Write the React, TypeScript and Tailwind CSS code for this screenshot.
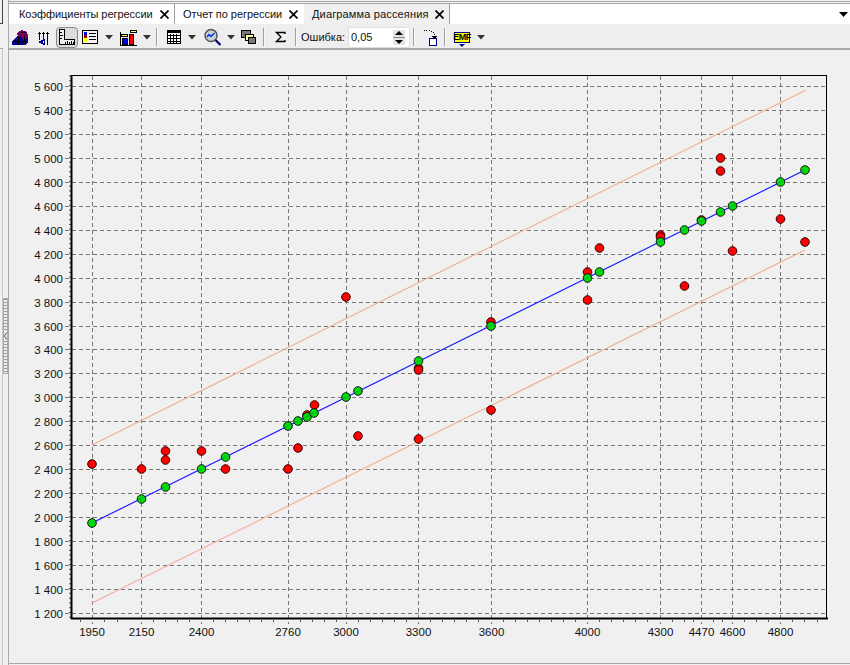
import type { ReactNode } from "react";

const font = "[font-family:'Liberation_Sans',Arial,sans-serif]";
const svgFont = "'Liberation Sans', Arial, sans-serif";

const yTicks = [5600, 5400, 5200, 5000, 4800, 4600, 4400, 4200, 4000, 3800, 3600, 3400, 3200, 3000, 2800, 2600, 2400, 2200, 2000, 1800, 1600, 1400, 1200];
const xTicks: [string, number][] = [
  ["1950", 92], ["2150", 141.5], ["2400", 201.5], ["2760", 288], ["3000", 346], ["3300", 418.5],
  ["3600", 491.5], ["4000", 587.5], ["4300", 660.5], ["4470", 701.5], ["4600", 732.5], ["4800", 780.5],
];
const minorTicks = [80, 104, 117, 153, 165, 177, 189, 213, 225, 237, 249, 261, 273, 300, 312, 324, 336, 358, 370, 382, 394, 406, 430, 442, 454, 466, 478, 503, 515, 527, 539, 551, 563, 575, 599, 611, 623, 635, 647, 672, 684, 693, 713, 722, 744, 756, 768, 792, 804, 817];

const redDots: [number, number][] = [
  [92, 464], [141.5, 469], [165.5, 451], [165.5, 460], [201.5, 451], [225.5, 469], [288, 469], [298, 448],
  [307, 415], [314.5, 405], [346, 297], [358, 436], [418.5, 368], [418.5, 370], [418.5, 439], [491, 322],
  [491, 410], [587.5, 272], [587.5, 300], [599.5, 248], [660.5, 235], [660.5, 237], [684.5, 286], [701.5, 220],
  [720.5, 158], [720.5, 171], [732.5, 251], [780.5, 219], [805, 242],
];
const greenDots: [number, number][] = [
  [92, 523], [141.5, 499], [165.5, 487], [201.5, 469], [225.5, 457], [288, 426], [298, 421], [307, 417], [314, 413],
  [346, 397], [358, 391], [418.5, 361], [491, 326], [587.5, 278], [599.5, 272], [660.5, 242], [684.5, 230],
  [701.5, 221], [720.5, 212], [732.5, 206], [780.5, 182], [805, 170],
];

function yOf(v: number) {
  return 86 + ((5600 - v) / 200) * 23.95;
}

function Chart() {
  // svg origin sits at page (9, 50)
  return (
    <svg width={841} height={613} viewBox="9 50 841 613" className="block">
      {yTicks.map((v) => (
        <g key={v}>
          <line x1={65} x2={826} y1={Math.round(yOf(v)) + 0.5} y2={Math.round(yOf(v)) + 0.5} stroke="#777" strokeDasharray="4 3" />
          <text x={63} y={Math.round(yOf(v)) + 4.5} textAnchor="end" fontSize={11.5} fill="#111" fontFamily={svgFont}>
            {String(v).replace(/(\d)(\d{3})$/, "$1 $2")}
          </text>
        </g>
      ))}
      {Array.from({ length: 114 }).map((_, i) => (
        <line key={i} x1={69} x2={71} y1={76 + i * 4.79} y2={76 + i * 4.79} stroke="#555" />
      ))}
      {xTicks.map(([label, x]) => (
        <g key={label}>
          <line x1={Math.floor(x) + 0.5} x2={Math.floor(x) + 0.5} y1={76} y2={624} stroke="#777" strokeDasharray="4 3" />
          <text x={x} y={636} textAnchor="middle" fontSize={11.5} fill="#111" fontFamily={svgFont}>
            {label}
          </text>
        </g>
      ))}
      {minorTicks.map((x) => (
        <line key={x} x1={x + 0.5} x2={x + 0.5} y1={620} y2={622} stroke="#555" />
      ))}
      <line x1={92} y1={445} x2={806} y2={90} stroke="#f0b09a" strokeWidth={1.2} />
      <line x1={92} y1={603} x2={805} y2={250} stroke="#f0b09a" strokeWidth={1.2} />
      <rect x={71.5} y={75.5} width={755} height={543} fill="none" stroke="#000" />
      <line x1={71.5} x2={71.5} y1={75} y2={619} stroke="#000" strokeWidth={2} />
      <line x1={71} x2={828} y1={618.5} y2={618.5} stroke="#000" strokeWidth={2} />
      {redDots.map(([x, y], i) => (
        <circle key={i} cx={x} cy={y} r={4.3} fill="#ff0000" stroke="#300" />
      ))}
      <line x1={92} y1={523} x2={805} y2={170} stroke="#2020ff" strokeWidth={1.1} />
      {greenDots.map(([x, y], i) => (
        <circle key={i} cx={x} cy={y} r={4.3} fill="#00e000" stroke="#111" />
      ))}
      <line x1={92} y1={523} x2={805} y2={170} stroke="#2020ff" strokeWidth={0.6} opacity={0.55} />
    </svg>
  );
}

function Tab({ label, className, labelClass }: { label: string; className: string; labelClass: string }) {
  return (
    <div className={`flex h-full items-center justify-between ${className}`}>
      <span className={`whitespace-nowrap text-[11px] leading-none text-[#111] ${labelClass}`}>{label}</span>
      <svg width="9" height="9" viewBox="0 0 9 9" className="shrink-0">
        <path d="M0.500 0.500L8.500 8.500M8.500 0.500L0.500 8.500" stroke="#000" strokeWidth="1.700" />
      </svg>
    </div>
  );
}

function Sep({ className = "" }: { className?: string }) {
  return <div className={`h-[18px] w-[2px] shrink-0 border-l border-[#a0a0a0] bg-[#f8f8f8] ${className}`} />;
}

function Caret({ className = "" }: { className?: string }) {
  return (
    <svg width="8" height="5" viewBox="0 0 8 5" className={`shrink-0 ${className}`}>
      <path d="M0 0h8L4 4.500z" fill="#333" />
    </svg>
  );
}

function Icon({ w, className = "", children }: { w: number; className?: string; children: ReactNode }) {
  return (
    <svg width={w} height={20} viewBox={`0 0 ${w} 20`} className={`shrink-0 ${className}`} shapeRendering="crispEdges">
      {children}
    </svg>
  );
}

function Toolbar() {
  return (
    <div className="flex h-[26px] items-center border-b-2 border-[#a8a8a8] bg-[#eeeeee] pl-[3px] pt-[2px]">
      <Icon w={16}>
        <path d="M0 18v-4l3-3 3-2 3 1 3-3 4 2v6l-3 3z" fill="#000090" />
        <path d="M5 7l2-3 3-1 2 1 3 1 1 3-1 4-4 1-2-3-3-1z" fill="#7a0060" />
        <path d="M3 12v6M6 10v8M9 10v8M12 8v9M1 14h12M9 5h5" stroke="#000" fill="none" />
      </Icon>
      <Icon w={12} className="ml-[9px]">
        <path d="M2.500 6v7M6.500 6v7M10.500 6v12" stroke="#000" />
        <path d="M1 6.500h3M2 5.500h1M5 6.500h3M6 5.500h1M9 6.500h3M10 5.500h1" stroke="#000" />
        <path d="M8 11.500L1 15l7 3.500z" fill="#000090" />
        <path d="M6 14h1v2H6z" fill="#fff" />
      </Icon>
      <div className="ml-[7px] flex h-[21px] w-[22px] shrink-0 items-center justify-center rounded-[4px] border border-[#8a8a8a] bg-[#dcdcdc]">
        <Icon w={16}>
          <path d="M0.500 2.500h5v10h10v5h-15z" fill="#eeeeee" stroke="#000" />
          <path d="M6 15v2M8 14v3M10 15v2M12 14v3M14 15v2M1 5h2M1 8h3M1 11h2" stroke="#000" />
        </Icon>
      </div>
      <Icon w={16} className="ml-[4px]">
        <rect x="0.500" y="3.500" width="15" height="13" fill="#f4f4f4" stroke="#000" />
        <rect x="2" y="5" width="3" height="3" fill="#0000ff" />
        <rect x="2" y="8" width="3" height="3" fill="#a00000" />
        <rect x="2" y="11" width="3" height="4" fill="#ffff00" />
        <path d="M7 6.500h7M7 9.500h7M7 12.500h7" stroke="#000" />
      </Icon>
      <Caret className="ml-[7px]" />
      <Icon w={17} className="ml-[7px]">
        <path d="M0.500 5v13.500h16" stroke="#000" fill="none" />
        <rect x="2.500" y="11.500" width="5" height="6" fill="#0000ff" stroke="#000" />
        <rect x="9.500" y="7.500" width="4" height="10" fill="#ff0000" stroke="#000" />
        <rect x="1.500" y="7.500" width="6" height="2" fill="#ffff66" stroke="#000" />
        <rect x="10.500" y="3.500" width="6" height="2" fill="#ffff66" stroke="#000" />
      </Icon>
      <Caret className="ml-[6px]" />
      <Sep className="ml-[5px]" />
      <Icon w={14} className="ml-[9px]">
        <rect x="0.500" y="3.500" width="13" height="13" fill="#fff" stroke="#000" />
        <rect x="1" y="4" width="12" height="2" fill="#000" />
        <path d="M3.500 7v9M6.500 7v9M9.500 7v9M1 8.500h12M1 11.500h12M1 14.500h12" stroke="#000" />
      </Icon>
      <Caret className="ml-[7px]" />
      <svg width="17" height="20" viewBox="0 0 17 20" className="ml-[8px] shrink-0">
        <circle cx="7" cy="8.500" r="6" fill="#c8d0d8" stroke="#555" strokeWidth="1.500" />
        <path d="M3 10l2-2.500 2 2 3.500-3.500" stroke="#0030e0" strokeWidth="1.400" fill="none" />
        <path d="M11.500 13l5 5" stroke="#000080" strokeWidth="2.200" />
      </svg>
      <Caret className="ml-[6px]" />
      <Icon w={15} className="ml-[6px]">
        <rect x="0.500" y="3.500" width="9" height="7" fill="#777" stroke="#000" />
        <rect x="4.500" y="7.500" width="8" height="6" fill="#ffff99" stroke="#000" />
        <rect x="7.500" y="10.500" width="7" height="6" fill="#777" stroke="#000" />
      </Icon>
      <Sep className="ml-[7px]" />
      <svg width="12" height="12" viewBox="0 0 12 12" className="ml-[10px] shrink-0">
        <path d="M10 3V1.500H1.500L6 6l-4.500 4.500H10V9" fill="none" stroke="#000" strokeWidth="1.300" />
      </svg>
      <Sep className="ml-[8px]" />
      <span className="ml-[4px] w-[43px] shrink-0 whitespace-nowrap text-[11px] text-[#111]">Ошибка:</span>
      <div className="ml-[4px] flex h-[21px] w-[62px] shrink-0 items-center justify-between rounded-[2px] border border-[#dddddd] bg-white pl-[2px] pr-[4px]">
        <span className="text-[11px] text-[#111]">0,05</span>
        <div className="flex h-[15px] w-[12px] flex-col items-center justify-center gap-[2px] bg-[#e4e4e4]">
          <svg width="8" height="4" viewBox="0 0 8 4"><path d="M0 4h8L4 0z" fill="#000" /></svg>
          <div className="h-px w-[12px] bg-[#888]" />
          <svg width="8" height="4" viewBox="0 0 8 4"><path d="M0 0h8L4 4z" fill="#000" /></svg>
        </div>
      </div>
      <Sep className="ml-[3px]" />
      <Icon w={14} className="ml-[9px]">
        <path d="M0 3h1M2 3h1M5 3h1M7 4h1M9 5h1M10 7h1" stroke="#000" />
        <path d="M7 9h7L10.500 12z" fill="#000" />
        <rect x="5.500" y="11.500" width="7" height="7" fill="#fff" stroke="#000090" strokeWidth="1.500" />
      </Icon>
      <Sep className="ml-[6px]" />
      <div className="relative ml-[8px] flex h-[11px] w-[16px] shrink-0 items-center justify-center border border-[#000080] bg-[#ffff00]">
        <span className="text-[9px] font-bold leading-none tracking-[-0.5px] text-black">EMF</span>
        <svg width="6" height="3" viewBox="0 0 6 3" className="absolute -bottom-[5px] left-[4px]">
          <path d="M0 0h6L3 3z" fill="#000090" />
        </svg>
      </div>
      <Caret className="ml-[7px]" />
    </div>
  );
}

export default function App() {
  return (
    <div className={`flex h-[665px] w-[850px] overflow-hidden bg-[#f0f0f0] ${font}`}>
      <div className="flex w-[9px] shrink-0 border-r border-[#a8a8a8]">
        <div className="flex w-[3px] shrink-0 flex-col">
          <div className="h-[24px] border-b border-r border-[#444]" />
          <div className="h-[25px] border-b border-[#a8a8a8]" />
          <div className="flex-1 border-r border-[#c8c8c8]" />
        </div>
        <div className="flex flex-1 items-center justify-center pt-[7px]">
          <div className="flex h-[76px] w-[5px] flex-col items-center justify-center border border-[#a8a8a8] bg-[repeating-linear-gradient(to_bottom,#999_0,#999_1px,#f0f0f0_1px,#f0f0f0_3px)]">
            <svg width="3" height="8" viewBox="0 0 3 8" className="bg-[#f0f0f0]">
              <path d="M2.500 0.500L0.500 4l2 3.500" stroke="#555" fill="none" />
            </svg>
          </div>
        </div>
      </div>
      <div className="flex min-w-0 flex-1 flex-col">
        <div className="mt-px h-[3px] border-y border-[#a8a8a8]" />
        <div className="flex h-[20px] items-stretch bg-white">
          <Tab label="Коэффициенты регрессии" labelClass="tracking-[-0.05px]" className="w-[166px] border-r border-[#a0a0a0] bg-white pl-[10px] pr-[5px]" />
          <Tab label="Отчет по регрессии" labelClass="tracking-[-0.05px]" className="w-[129px] bg-white pl-[8px] pr-[6px]" />
          <Tab label="Диаграмма рассеяния" labelClass="tracking-[0.15px]" className="w-[146px] border-r border-[#a0a0a0] bg-[#f0f0f0] pl-[8px] pr-[5px]" />
          <div className="flex flex-1 items-center justify-end pr-[2px]">
            <svg width="9" height="5" viewBox="0 0 9 5"><path d="M0 0h9L4.500 5z" fill="#000" /></svg>
          </div>
        </div>
        <Toolbar />
        <div className="flex-1 overflow-hidden">
          <Chart />
        </div>
        <div className="h-[2px] border-t border-[#a8a8a8]" />
      </div>
    </div>
  );
}
